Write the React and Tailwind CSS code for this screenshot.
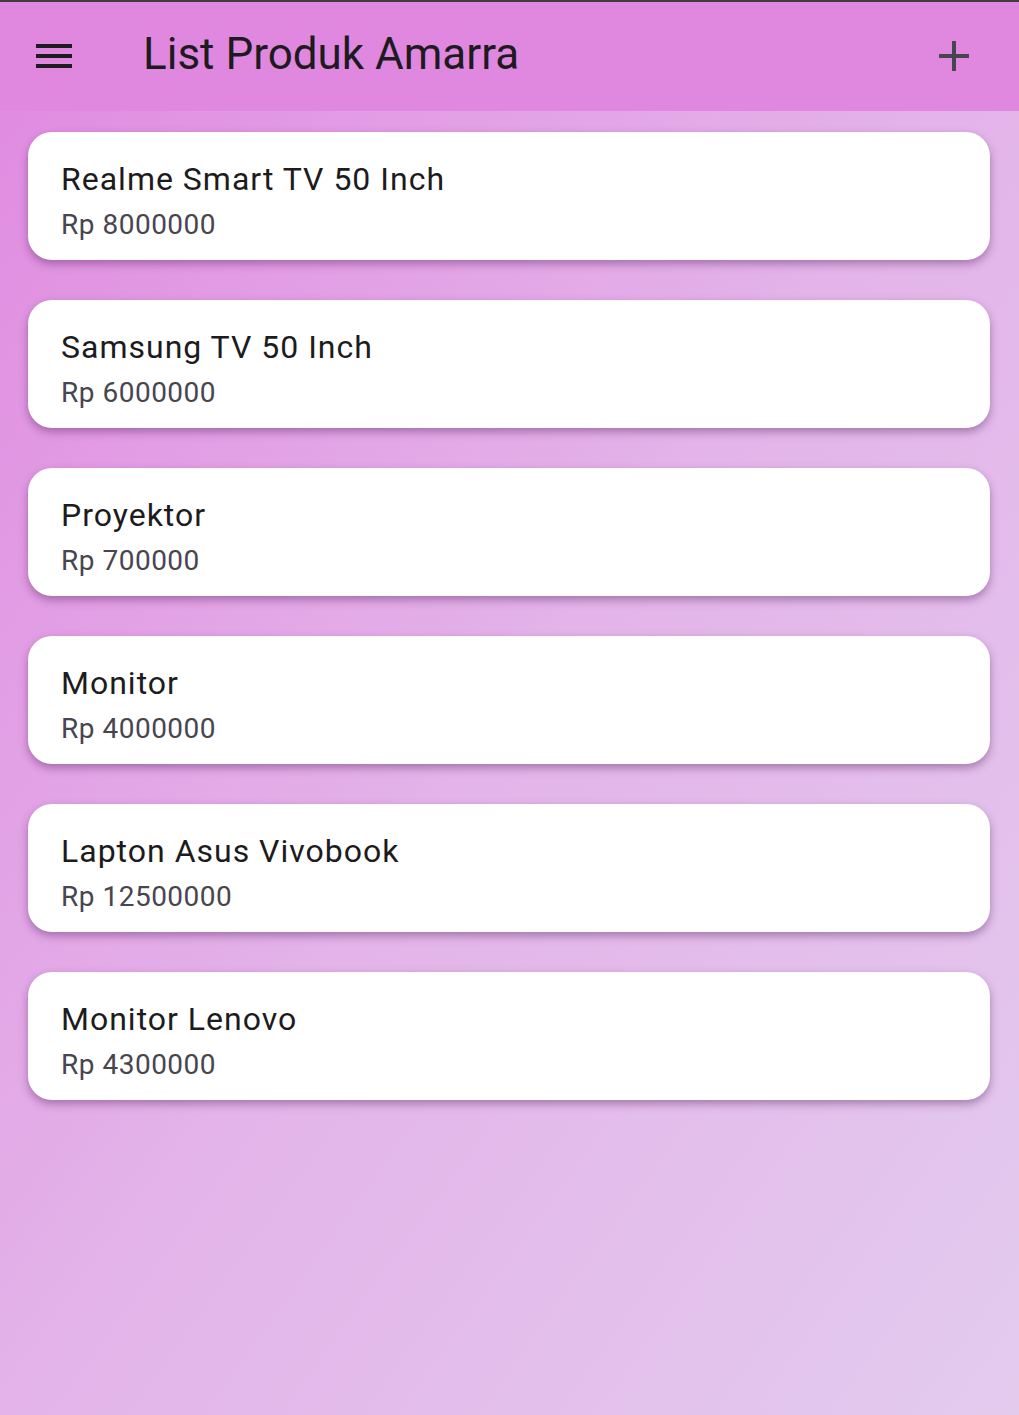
import React from 'react';

const products = [
  { name: 'Realme Smart TV 50 Inch', price: 8000000 },
  { name: 'Samsung TV 50 Inch', price: 6000000 },
  { name: 'Proyektor', price: 700000 },
  { name: 'Monitor', price: 4000000 },
  { name: 'Lapton Asus Vivobook', price: 12500000 },
  { name: 'Monitor Lenovo', price: 4300000 },
];

const MenuIcon = () => (
  <svg width="36" height="24" viewBox="0 0 36 24" className="text-[#1d1b20]">
    <rect x="0" y="0" width="36" height="4" fill="currentColor" />
    <rect x="0" y="10" width="36" height="4" fill="currentColor" />
    <rect x="0" y="20" width="36" height="4" fill="currentColor" />
  </svg>
);

const PlusIcon = () => (
  <svg width="30" height="30" viewBox="0 0 30 30" className="text-[#49454f]">
    <rect x="13" y="0" width="4" height="30" fill="currentColor" />
    <rect x="0" y="13" width="30" height="4" fill="currentColor" />
  </svg>
);

const ProductCard = ({ item }) => (
  <div className="bg-white rounded-[24px] shadow-[0_4px_8px_rgba(80,30,90,0.42)] h-[128px] px-[33px] pt-[25px]">
    <div className="text-[32px] leading-[44px] tracking-[1px] text-[#1d1b20]">{item.name}</div>
    <div className="text-[28px] leading-[38px] tracking-[0.5px] text-[#49454f] mt-[5px]">Rp {item.price}</div>
  </div>
);

const App = () => {
  return (
    <div className="min-h-[1415px] flex flex-col font-['Roboto',sans-serif] bg-gradient-to-br from-[#e089e0] via-[#e3b3e9] to-[#e3cbee]">
      <div className="h-[2px] bg-[#3f3f3f]" />
      <header className="h-[109px] bg-[#e088df] flex items-center pl-[36px] pr-[50px] pb-[1px]">
        <MenuIcon />
        <h1 className="ml-[71px] text-[44px] text-[#1d1b20] flex-1 leading-none pb-[4px]">List Produk Amarra</h1>
        <PlusIcon />
      </header>
      <main className="flex flex-col gap-[40px] pt-[21px] pl-[28px] pr-[29px]">
        {products.map((p, i) => (
          <ProductCard key={i} item={p} />
        ))}
      </main>
    </div>
  );
};

export default App;
